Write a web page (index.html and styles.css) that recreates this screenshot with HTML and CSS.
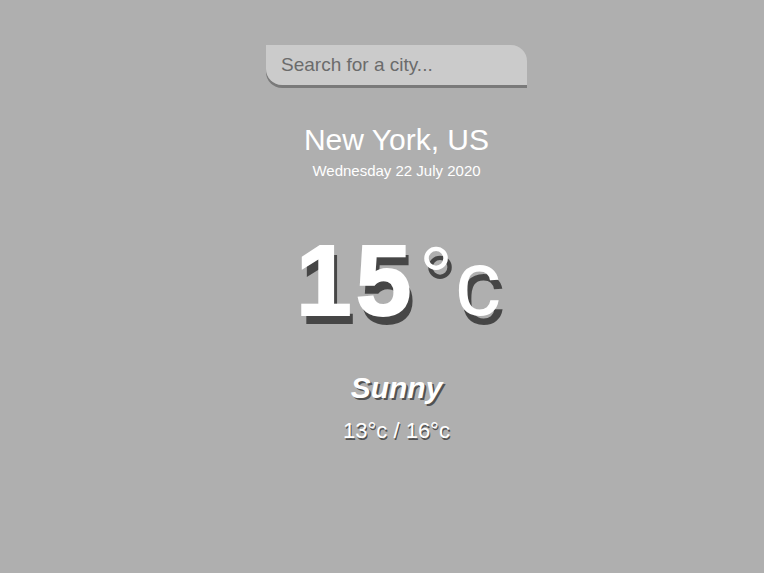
FILE: index.html
```html
<!DOCTYPE html>
<html lang="en">
<head>
<meta charset="utf-8">
<title>Weather</title>
<link rel="stylesheet" href="styles.css">
</head>
<body>
<main class="app">
  <div class="search-box">
    <input class="search-bar" type="text" placeholder="Search for a city...">
  </div>
  <div class="location-box">
    <div class="location">New York, US</div>
    <div class="date">Wednesday 22 July 2020</div>
  </div>
  <div class="weather-box">
    <div class="temp"><span class="num">15</span><span class="deg">°</span><span class="unit">c</span></div>
    <div class="weather">Sunny</div>
    <div class="hi-low">13°c / 16°c</div>
  </div>
</main>
</body>
</html>
```

FILE: styles.css
```css
* { box-sizing: border-box; }
html, body {
  margin: 0;
  padding: 0;
  height: 100%;
  background: #afafaf;
}
body {
  font-family: "Liberation Sans", Arial, sans-serif;
  color: #fff;
}
.app {
  padding-left: 29px;
  display: flex;
  flex-direction: column;
  align-items: center;
  min-height: 100%;
}
.search-box {
  padding-top: 45px;
}
.search-bar {
  display: block;
  width: 261px;
  height: 40px;
  padding: 0 15px;
  border: none;
  outline: none;
  border-radius: 0 16px 0 16px;
  background: rgba(255, 255, 255, 0.35);
  box-shadow: 0 3px 0 rgba(0, 0, 0, 0.3);
  font-family: "Liberation Sans", Arial, sans-serif;
  font-size: 19px;
  color: #666;
}
.search-bar::placeholder {
  color: #6b6b6b;
  opacity: 1;
}
.location-box {
  margin-top: 38px;
  text-align: center;
}
.location {
  font-size: 30px;
  line-height: 34px;
}
.date {
  margin-top: 5px;
  font-size: 15px;
  line-height: 18px;
}
.weather-box {
  text-align: center;
  display: flex;
  flex-direction: column;
  align-items: center;
}
.temp {
  margin-top: 52px;
  padding-left: 4px;
  font-size: 97px;
  line-height: 97px;
  font-weight: 700;
  white-space: nowrap;
  text-shadow: 4px 9px 0 rgba(0, 0, 0, 0.6);
}
.num {
  font-size: 100px;
  letter-spacing: 4px;
  -webkit-text-stroke: 2px #fff;
}
.deg {
  font-weight: 400;
  font-size: 84px;
  line-height: 0;
  vertical-align: 10px;
  margin-left: 4px;
}
.unit {
  font-weight: 400;
  font-size: 92px;
  margin-left: 2px;
}
.weather {
  margin-top: 39px;
  font-size: 30px;
  line-height: 34px;
  font-weight: 700;
  font-style: italic;
  text-shadow: 2px 2px 0 rgba(0, 0, 0, 0.55);
}
.hi-low {
  margin-top: 13px;
  font-size: 22px;
  line-height: 26px;
  text-shadow: 1px 2px 0 rgba(0, 0, 0, 0.55);
}
```
